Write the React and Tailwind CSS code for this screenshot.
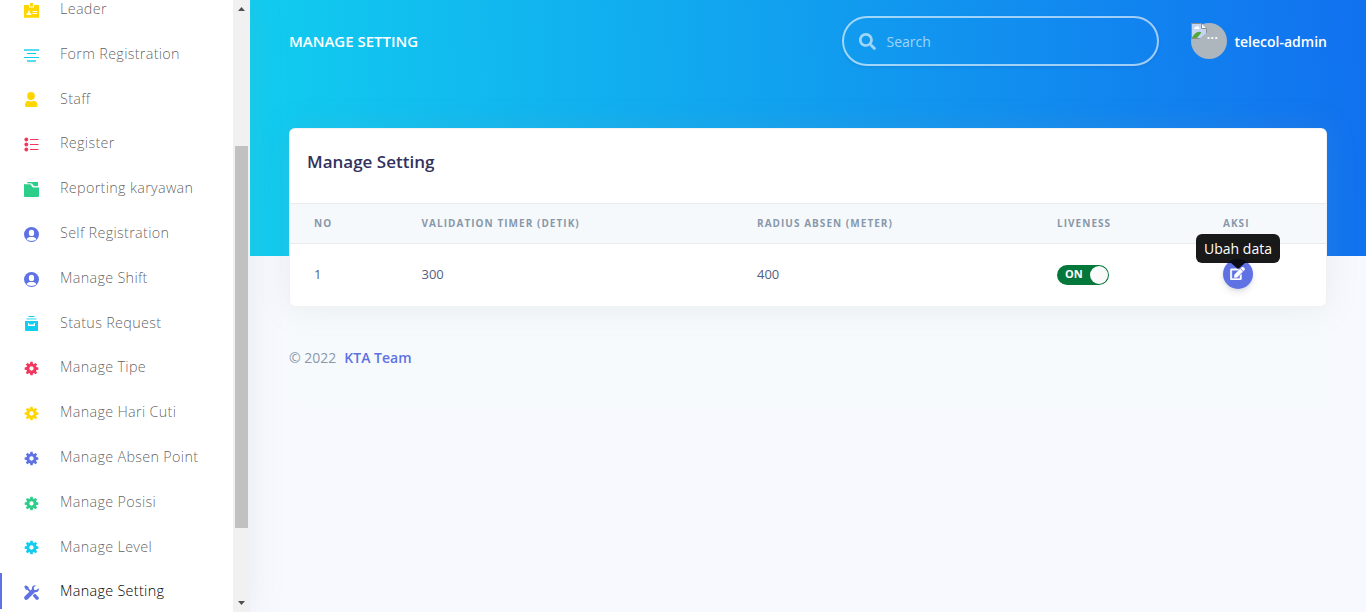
import React from "react";

const Gear = () => (
  <svg viewBox="0 0 16 16" className="h-[15px] w-[15px]" fill="currentColor">
    <path fillRule="evenodd" d="M6.800.700h2.400l.4 2.100 1 .4 1.800-1.200 1.600 1.600-1.200 1.800.4 1 2.100.4v2.400l-2.100.4-.4 1 1.200 1.800-1.600 1.600-1.800-1.200-1 .4-.4 2.100H6.800l-.4-2.100-1-.4-1.800 1.200L2 12.400l1.200-1.800-.4-1L.700 9.200V6.800l2.100-.4.4-1L2 3.600 3.600 2l1.800 1.200 1-.4zM8 5.700a2.300 2.300 0 1 0 0 4.600 2.300 2.300 0 0 0 0-4.600z" />
  </svg>
);
const Badge = () => (
  <svg viewBox="0 0 15 15" className="h-[15px] w-[15px]" fill="currentColor">
    <path fillRule="evenodd" d="M0 2h5v2.500h5V2h5v12.700H0zM2.500 12h5c0-1.500-1-1.800-1.700-2V7.500H4.200v2C3.500 9.700 2.500 10 2.500 12zM8.500 8H13v1H8.500zM8.500 10H13v1H8.500z" />
    <path d="M6 0h3v3.500H6z" />
  </svg>
);
const Lines = () => (
  <svg viewBox="0 0 15 15" className="h-[15px] w-[15px]" fill="currentColor">
    <path fillOpacity=".7" d="M0 1h15v2H0zM3 12h9v2H3z" />
    <path d="M3 5h9v1H3zM0 9h15v1H0z" />
  </svg>
);
const Person = () => (
  <svg viewBox="0 0 15 15" className="h-[15px] w-[15px]" fill="currentColor">
    <ellipse cx="7" cy="4" rx="3.900" ry="4" />
    <path d="M1 13.500c0-3 1-4.500 3-4.800 2 1 4 1 6 0 2.200.3 3.500 2 3.500 4.800 0 1-.5 1.300-1.500 1.500H2.500C1.500 14.800 1 14.500 1 13.500z" />
  </svg>
);
const Bullets = () => (
  <svg viewBox="0 0 15 15" className="h-[15px] w-[15px]" fill="currentColor">
    <circle cx="2.300" cy="2.500" r="1.900" /><circle cx="2.300" cy="7.500" r="1.900" /><circle cx="2.300" cy="12.500" r="1.900" />
    <path d="M6 2h8.500v1H6zM6 7h8.500v1H6zM6 12h8.500v1H6z" />
  </svg>
);
const Folder = () => (
  <svg viewBox="0 0 15 15" className="h-[15px] w-[15px]" fill="currentColor">
    <path d="M3.500 0H14v4.200h-4L8 1.600H3z" />
    <path d="M0 2h6.200L8.700 5.200H15V14q0 1-1 1H1q-1 0-1-1z" />
    <path d="M.5 1.900h6L9 5h6" fill="none" stroke="#fff" strokeWidth=".8" strokeOpacity=".8" />
  </svg>
);
const UserCircle = () => (
  <svg viewBox="0 0 15 15" className="h-[15px] w-[15px]">
    <circle cx="7.500" cy="7.500" r="7.500" fill="currentColor" />
    <rect x="4.900" y="2.800" width="5.200" height="6.200" rx="2.600" fill="#fff" />
    <path d="M2.600 12.300c.7-1.700 2-2.200 3.400-2.400h3c1.400.2 2.700.7 3.400 2.400-2.700 2.300-7.100 2.300-9.800 0z" fill="#fff" />
  </svg>
);
const Archive = () => (
  <svg viewBox="0 0 15 15" className="h-[15px] w-[15px]" fill="currentColor">
    <path d="M4.500 0h6v1h-6z" /><path fillOpacity=".6" d="M2.500 2.200h10v1.500h-10z" />
    <path fillRule="evenodd" d="M1 5h13v10H2q-1 0-1-1zM4 7v3h7V7H9.800v1.500H5.200V7z" />
  </svg>
);
const Tools = () => (
  <svg viewBox="0 0 15 15" className="h-[15px] w-[15px]" fill="currentColor">
    <path d="M.2 1.700 1.700.2 4.600 1.900v1.500l2.500 2.500-1.300 1.300-2.500-2.500H1.900z" />
    <path d="M14.700 3.200 12.400 5 10 4.800 9.800 2.600 11.800.300C9.500-.3 7.400 1.700 7.900 4.300L.8 11.200c-2 2.300.900 5.100 3 3L10.800 7.200c2.700.500 4.700-1.700 3.900-4z" />
    <path d="m8.700 10.700 2.200-2.200 3.500 3.400c1.500 1.700-.800 4-2.500 2.500z" />
  </svg>
);

const NAV = [
  ["Leader", Badge, "text-[#ffd600]"],
  ["Form Registration", Lines, "text-[#11cdef]"],
  ["Staff", Person, "text-[#ffd600]"],
  ["Register", Bullets, "text-[#f5365c]"],
  ["Reporting karyawan", Folder, "text-[#2dce89]"],
  ["Self Registration", UserCircle, "text-[#5e72e4]"],
  ["Manage Shift", UserCircle, "text-[#5e72e4]"],
  ["Status Request", Archive, "text-[#11cdef]"],
  ["Manage Tipe", Gear, "text-[#f5365c]"],
  ["Manage Hari Cuti", Gear, "text-[#ffd600]"],
  ["Manage Absen Point", Gear, "text-[#5e72e4]"],
  ["Manage Posisi", Gear, "text-[#2dce89]"],
  ["Manage Level", Gear, "text-[#11cdef]"],
  ["Manage Setting", Tools, "text-[#5e72e4]"],
];

const COLS = "grid grid-cols-[107.500px_335.500px_300px_166px_1fr] pl-6";

function Sidebar() {
  return (
    <aside className="z-10 flex h-full w-[250px] shrink-0 bg-white shadow-[0_0_32px_0_rgba(136,152,170,0.15)]">
      <nav className="-mt-[13.500px] flex h-[640px] w-[233px] flex-col">
        {NAV.map(([label, Icon, color], i) => (
          <a key={label} className={`flex h-[44.800px] shrink-0 items-center ${i === NAV.length - 1 ? "text-black" : "text-black/65"}`}>
            <span className={`mr-[22px] h-9 w-0.5 ${i === NAV.length - 1 ? "bg-[#5e72e4]" : ""}`} />
            <span className={`mt-[3px] w-9 ${color}`}><Icon /></span>
            <span className="text-[14.400px] font-light tracking-[0.310px]">{label}</span>
          </a>
        ))}
      </nav>
      <div className="flex h-full w-[17px] flex-col items-center bg-[#f1f1f1] pr-px">
        <svg className="h-[17px] w-[17px] shrink-0" viewBox="0 0 17 17" fill="#505050"><path d="M5 11h7L8.500 7z" /></svg>
        <div className="mt-[129px] h-[382px] w-[13px] bg-[#c1c1c1]" />
        <svg className="mt-auto h-[17px] w-[17px] shrink-0" viewBox="0 0 17 17" fill="#505050"><path d="M5 6h7l-3.500 4z" /></svg>
      </div>
    </aside>
  );
}

function Topbar() {
  return (
    <header className="flex h-[82px] items-center pr-[39px] pl-[39px] text-white">
      <h4 className="text-[15px] leading-6 font-semibold tracking-[-0.010px]">MANAGE SETTING</h4>
      <div className="ml-auto flex h-[50px] w-[317px] items-center rounded-[32px] border-2 border-white/60 pl-[15px] text-white/60 shadow-[0_1px_3px_rgba(50,50,93,0.15)]">
        <svg className="h-[17px] w-[17px]" viewBox="0 0 512 512" fill="currentColor"><path d="M505 442.700 405.300 343c-4.500-4.500-10.600-7-17-7H372c27.600-35.300 44-79.700 44-128C416 93.100 322.900 0 208 0S0 93.100 0 208s93.100 208 208 208c48.300 0 92.700-16.400 128-44v16.300c0 6.400 2.500 12.500 7 17l99.700 99.700c9.400 9.400 24.600 9.400 33.900 0l28.300-28.300c9.400-9.400 9.400-24.600.1-34zM208 336c-70.700 0-128-57.200-128-128s57.200-128 128-128 128 57.200 128 128-57.200 128-128 128z" /></svg>
        <span className="ml-[11px] text-[14px]">Search</span>
      </div>
      <div className="ml-8 flex h-9 w-9 rounded-full bg-[#adb5bd]">
        <svg className="h-4 w-4 shrink-0" viewBox="0 0 16 16">
          <path d="M.5.500h10l5 5v10H.5z" fill="#c5d5f3" stroke="#8e8e8e" />
          <path d="M10.500.500v5h5" fill="#fff" stroke="#8e8e8e" />
          <path d="M3 6c0-2 2-1.800 2.200-2.600C7 2.500 8.500 4 8.500 6z" fill="#fff" />
          <path d="M1 15c1.500-4 6-8 9.500-5.500L6 15z" fill="#54a83b" />
          <path d="m8 16 8-6.500V16z" fill="#adb5bd" /><path d="M1 15.500h6M15.500 9V6" stroke="#8e8e8e" />
        </svg>
        <span className="text-[14px] leading-[22px] font-semibold">...</span>
      </div>
      <span className="ml-2 text-[14px] font-semibold">telecol-admin</span>
    </header>
  );
}

export default function App() {
  return (
    <div className="flex h-[612px] w-[1366px] overflow-hidden bg-[#f8f9fe] font-['Open_Sans',sans-serif]">
      <Sidebar />
      <main className="flex w-[1116px] flex-col">
        <div className="h-64 shrink-0 bg-[linear-gradient(87deg,#11cdef_0,#1171ef_100%)]">
          <Topbar />
        </div>
        <section className="relative mx-[39px] -mt-32 h-[179px] shrink-0 rounded-md border border-black/5 bg-white bg-clip-border shadow-[0_0_32px_0_rgba(136,152,170,0.15)]">
          <h3 className="h-[74px] pt-[20px] pl-[17px] text-[17px] leading-[26px] font-semibold text-[#32325d]">Manage Setting</h3>
          <div className={`${COLS} h-[41px] items-center border-y border-[#e9ecef] bg-[#f6f9fc] text-[10px] font-bold tracking-[1.040px] text-[#8898aa]`}>
            <span>NO</span><span>VALIDATION TIMER (DETIK)</span><span>RADIUS ABSEN (METER)</span><span>LIVENESS</span><span>AKSI</span>
          </div>
          <div className={`${COLS} h-[61px] items-center text-[13px] text-[#525f7f]`}>
            <span>1</span><span>300</span><span>400</span>
            <span className="flex h-5 w-[52px] items-center justify-between rounded-full bg-[#04773b] pr-px pl-2 text-[11px] font-bold text-white">
              ON<span className="h-[18px] w-[18px] rounded-full bg-[#fafafa]" />
            </span>
            <span className="relative mb-[2px] flex h-[30px] w-[30px] items-center justify-center rounded-full bg-[#5e72e4] text-white shadow-[0_4px_6px_rgba(50,50,93,0.11),0_1px_3px_rgba(0,0,0,0.08)]">
              <svg className="mr-px h-[13px] w-[15px]" viewBox="0 0 576 512" fill="currentColor" stroke="currentColor" strokeWidth="16"><path d="M402.600 83.200l90.200 90.200c3.800 3.800 3.800 10 0 13.800L274.400 405.600l-92.800 10.300c-12.400 1.400-22.900-9.100-21.500-21.500l10.300-92.800L388.800 83.200c3.800-3.800 10-3.800 13.800 0zm162-22.900l-48.800-48.800c-15.200-15.200-39.900-15.200-55.200 0l-35.400 35.400c-3.800 3.800-3.800 10 0 13.800l90.200 90.200c3.800 3.800 10 3.800 13.800 0l35.400-35.400c15.200-15.300 15.200-40 0-55.200zM384 346.200V448H64V128h229.800c3.200 0 6.200-1.300 8.500-3.500l40-40c7.600-7.600 2.200-20.500-8.500-20.500H48C21.500 64 0 85.500 0 112v352c0 26.500 21.500 48 48 48h352c26.500 0 48-21.500 48-48V306.200c0-10.700-12.900-16-20.500-8.500l-40 40c-2.200 2.300-3.500 5.300-3.500 8.500z" /></svg>
              <span className="absolute -top-[25px] -left-[27px] flex h-[29px] w-[84px] items-center justify-center rounded-md bg-black/90 text-[14px]">Ubah data
                <svg className="absolute top-[29px] left-[35px] h-[6px] w-[14px]" viewBox="0 0 14 6"><path d="M0 0h14L7 6z" fillOpacity=".9" /></svg>
              </span>
            </span>
          </div>
        </section>
        <footer className="mx-[39px] flex h-[100px] shrink-0 items-center gap-2 bg-[#f7fafc] text-[14px] text-[#8898aa]">
          <span>© 2022</span><a className="font-semibold text-[#5e72e4]">KTA Team</a>
        </footer>
      </main>
    </div>
  );
}
